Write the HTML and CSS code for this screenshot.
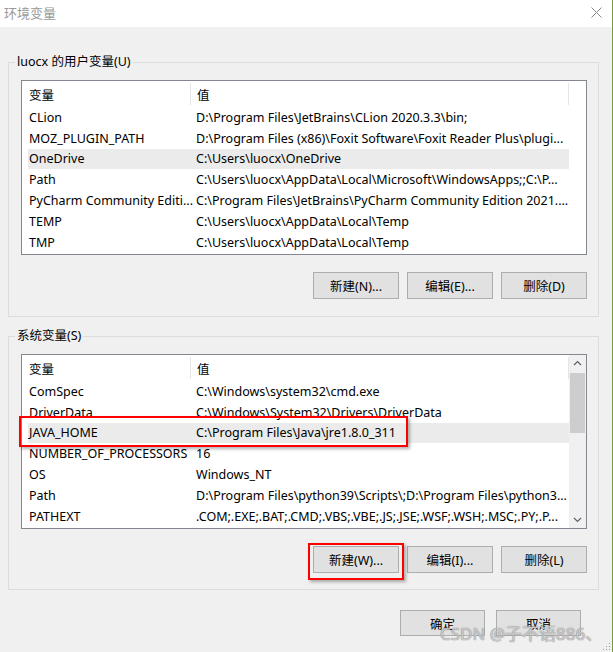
FILE: index.html
```html
<!DOCTYPE html>
<html lang="zh-CN">
<head>
    <meta charset="UTF-8">
    <title>环境变量</title>
    <link rel="stylesheet" href="styles.css">
</head>
<body>
    <div class="window">
        <div class="titlebar">
            <span class="title">环境变量</span>
            <svg class="close" width="11" height="11" viewBox="0 0 11 11">
                <path d="M0.5 0.5L10.5 10.5M10.5 0.5L0.5 10.5" stroke="#8a8a8a" stroke-width="1"/>
            </svg>
        </div>

        <div class="content">
            <fieldset class="group user-group">
                <legend>luocx 的用户变量(U)</legend>
                <div class="list">
                    <div class="row head">
                        <span class="name">变量</span>
                        <span class="sep"></span>
                        <span class="value">值</span>
                        <span class="sep end"></span>
                    </div>
                    <div class="row"><span class="name">CLion</span><span class="value">D:\Program Files\JetBrains\CLion 2020.3.3\bin;</span></div>
                    <div class="row"><span class="name">MOZ_PLUGIN_PATH</span><span class="value">D:\Program Files (x86)\Foxit Software\Foxit Reader Plus\plugi...</span></div>
                    <div class="row selected"><span class="name">OneDrive</span><span class="value">C:\Users\luocx\OneDrive</span></div>
                    <div class="row"><span class="name">Path</span><span class="value">C:\Users\luocx\AppData\Local\Microsoft\WindowsApps;;C:\P...</span></div>
                    <div class="row"><span class="name">PyCharm Community Editi...</span><span class="value">C:\Program Files\JetBrains\PyCharm Community Edition 2021....</span></div>
                    <div class="row"><span class="name">TEMP</span><span class="value">C:\Users\luocx\AppData\Local\Temp</span></div>
                    <div class="row"><span class="name">TMP</span><span class="value">C:\Users\luocx\AppData\Local\Temp</span></div>
                </div>
                <div class="buttons">
                    <button class="btn">新建(N)...</button>
                    <button class="btn">编辑(E)...</button>
                    <button class="btn">删除(D)</button>
                </div>
            </fieldset>

            <fieldset class="group sys-group">
                <legend>系统变量(S)</legend>
                <div class="list scrolled">
                    <div class="rows">
                        <div class="row head">
                            <span class="name">变量</span>
                            <span class="sep"></span>
                            <span class="value">值</span>
                            <span class="sep end"></span>
                        </div>
                        <div class="row"><span class="name">ComSpec</span><span class="value">C:\Windows\system32\cmd.exe</span></div>
                        <div class="row"><span class="name">DriverData</span><span class="value">C:\Windows\System32\Drivers\DriverData</span></div>
                        <div class="row selected marked"><span class="name">JAVA_HOME</span><span class="value">C:\Program Files\Java\jre1.8.0_311</span></div>
                        <div class="row"><span class="name">NUMBER_OF_PROCESSORS</span><span class="value">16</span></div>
                        <div class="row"><span class="name">OS</span><span class="value">Windows_NT</span></div>
                        <div class="row"><span class="name">Path</span><span class="value">D:\Program Files\python39\Scripts\;D:\Program Files\python3...</span></div>
                        <div class="row"><span class="name">PATHEXT</span><span class="value">.COM;.EXE;.BAT;.CMD;.VBS;.VBE;.JS;.JSE;.WSF;.WSH;.MSC;.PY;.P...</span></div>
                    </div>
                    <div class="scrollbar">
                        <svg width="17" height="17" viewBox="0 0 17 17"><path d="M5 10L8.5 6.5L12 10" fill="none" stroke="#606060" stroke-width="1.2"/></svg>
                        <div class="track"><div class="thumb"></div></div>
                        <svg width="17" height="17" viewBox="0 0 17 17"><path d="M5 7L8.5 10.5L12 7" fill="none" stroke="#606060" stroke-width="1.2"/></svg>
                    </div>
                </div>
                <div class="buttons">
                    <button class="btn marked-btn">新建(W)...</button>
                    <button class="btn">编辑(I)...</button>
                    <button class="btn">删除(L)</button>
                </div>
            </fieldset>

            <div class="footer">
                <button class="btn">确定</button>
                <button class="btn">取消</button>
            </div>
        </div>

        <div class="watermark">CSDN @子不语886、</div>
        <div class="grip"></div>
    </div>
</body>
</html>
```

FILE: styles.css
```css
body {
    margin: 0;
    background: #7c9a3c;
    font-family: "Noto Sans", "Noto Sans CJK SC", sans-serif;
    font-size: 12px;
    color: #000;
}
.window {
    position: relative;
    width: 612px;
    height: 652px;
    background: #f0f0f0;
    overflow: hidden;
}
.titlebar {
    height: 27px;
    background: #fff;
    display: flex;
    align-items: center;
    justify-content: space-between;
    padding: 0 10px 3px 4px;
    box-sizing: border-box;
}
.title {
    color: #999;
    font-size: 13px;
}
.content {
    padding: 27px 13px 0 8px;
}
.group {
    margin: 0;
    border: 1px solid #dcdcdc;
    padding: 10px 11px 17px 12px;
}
.group legend {
    padding: 0 2px;
    margin-left: -6px;
    font-size: 12.5px;
    line-height: 16px;
}
.sys-group {
    margin-top: 11px;
    padding-bottom: 16px;
}
.list {
    border: 1px solid #828790;
    background: #fff;
    height: 175px;
    box-sizing: border-box;
    padding: 2px 0 0 6px;
}
.scrolled {
    display: flex;
}
.scrolled .rows {
    width: 541px;
}
.row {
    display: flex;
    align-items: center;
    height: 20.8px;
    width: 541px;
    font-size: 12.5px;
    white-space: nowrap;
}
.row .name {
    flex: none;
    width: 168px;
    padding-left: 1px;
    box-sizing: border-box;
}
.row.head {
    height: 22px;
    margin-bottom: 2px;
}
.row.head .name {
    width: 162px;
}
.row.head .value {
    padding-left: 6px;
}
.sep {
    width: 1px;
    height: 22px;
    background: #e5e5e5;
}
.sep.end {
    margin-left: auto;
}
.selected {
    background: #ebebeb;
}
.marked {
    position: relative;
}
.marked::after {
    content: "";
    position: absolute;
    left: -9px;
    top: -7px;
    width: 385px;
    height: 27px;
    border: 2px solid #f00;
    box-shadow: 2px 2px 3px rgba(0, 0, 0, 0.3);
}
.scrollbar {
    width: 17px;
    display: flex;
    flex-direction: column;
    background: #f0f0f0;
    margin-top: -2px;
}
.track {
    flex: 1;
}
.thumb {
    width: 15px;
    margin: 1px auto 0;
    height: 60px;
    background: #cdcdcd;
}
.buttons {
    display: flex;
    justify-content: flex-end;
    gap: 8px;
    margin-top: 17px;
}
.btn {
    width: 86px;
    height: 27px;
    background: #e1e1e1;
    border: 1px solid #adadad;
    font-family: inherit;
    font-size: 12.5px;
    padding: 0;
    color: #000;
}
.marked-btn {
    position: relative;
}
.marked-btn::after {
    content: "";
    position: absolute;
    left: -6px;
    top: -4px;
    width: 92px;
    height: 33px;
    border: 2px solid #f00;
    box-shadow: 2px 2px 3px rgba(0, 0, 0, 0.3);
}
.footer {
    display: flex;
    justify-content: flex-end;
    gap: 11px;
    margin-top: 20px;
    padding-right: 18px;
}
.footer .btn {
    width: 85px;
    height: 26px;
}
.watermark {
    position: absolute;
    left: 440px;
    top: 623px;
    font-size: 17px;
    line-height: 22px;
    color: rgba(255, 255, 255, 0.55);
    text-shadow: 0 0 1px #888, 0 0 1px #888;
    pointer-events: none;
}
.grip {
    position: absolute;
    right: 2px;
    bottom: 2px;
    width: 8px;
    height: 8px;
    background: radial-gradient(circle, #9a9a9a 0.8px, transparent 1px) 0 0 / 3px 3px;
    clip-path: polygon(100% 0, 100% 100%, 0 100%);
}
```
